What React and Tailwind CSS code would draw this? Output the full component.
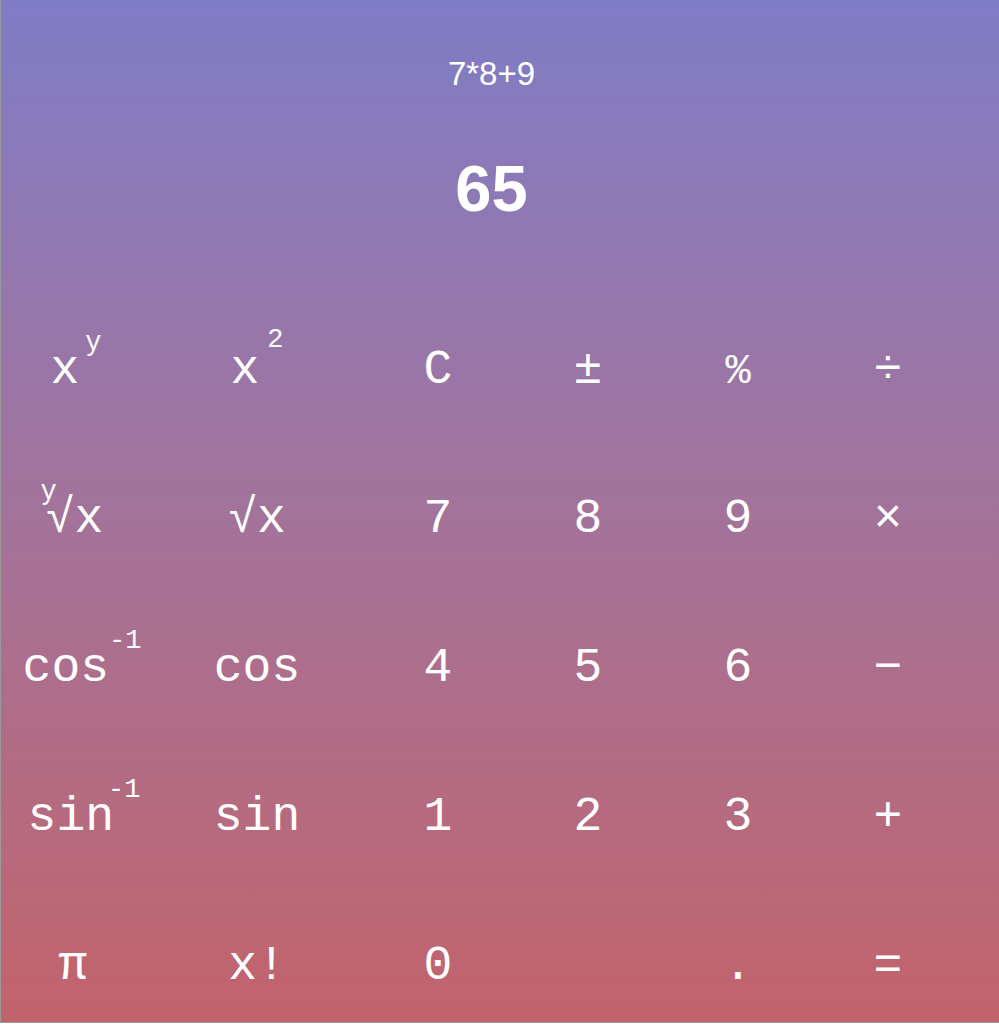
import React from "react";

const mono = { fontFamily: '"Liberation Mono", "Courier New", monospace' };

const Sup = ({ children, className = "" }) => (
  <span className={`relative -top-[33px] text-[27px] ${className}`}>{children}</span>
);

const keys = [
  [<>x<Sup className="ml-[6px]">y</Sup></>, <>x<Sup className="ml-[8px] -top-[36px]">2</Sup></>, "C", "±", <span className="text-[42px]">%</span>, "÷"],
  [<span className="-ml-[8px]"><Sup className="-mr-[11px] -top-[31px]">y</Sup>√x</span>, "√x", "7", "8", "9", "×"],
  [<span className="pl-[12px]">cos<Sup className="-top-[29px] text-[25px]">-1</Sup></span>, "cos", "4", "5", "6", "−"],
  [<span className="pl-[16px]">sin<Sup className="-top-[28px] text-[25px] -ml-[6px]">-1</Sup></span>, "sin", "1", "2", "3", "+"],
  [<span className="-ml-[6px]">π</span>, "x!", "0", "", ".", "="],
];

const App = () => {
  return (
    <div className="h-[1023px] w-full overflow-hidden border-l border-b border-[#9a9a9a] bg-gradient-to-b from-[#7f7cc6] to-[#c2636b] text-white">
      <div className="w-[981px] pt-[49px] text-center" style={{ fontFamily: '"Liberation Sans", Arial, sans-serif' }}>
        <div className="text-[33px]">7*8+9</div>
        <div className="mt-[53px] text-[65px] font-bold leading-[73px]">65</div>
      </div>

      <div className="mt-[71px] grid grid-cols-[150px_212px_150px_150px_150px_150px] auto-rows-[149px]" style={mono}>
        {keys.flat().map((label, i) => (
          <button
            key={i}
            className="flex items-center justify-center whitespace-nowrap text-[48px] leading-none text-white"
          >
            <span>{label}</span>
          </button>
        ))}
      </div>
    </div>
  );
};

export default App;
